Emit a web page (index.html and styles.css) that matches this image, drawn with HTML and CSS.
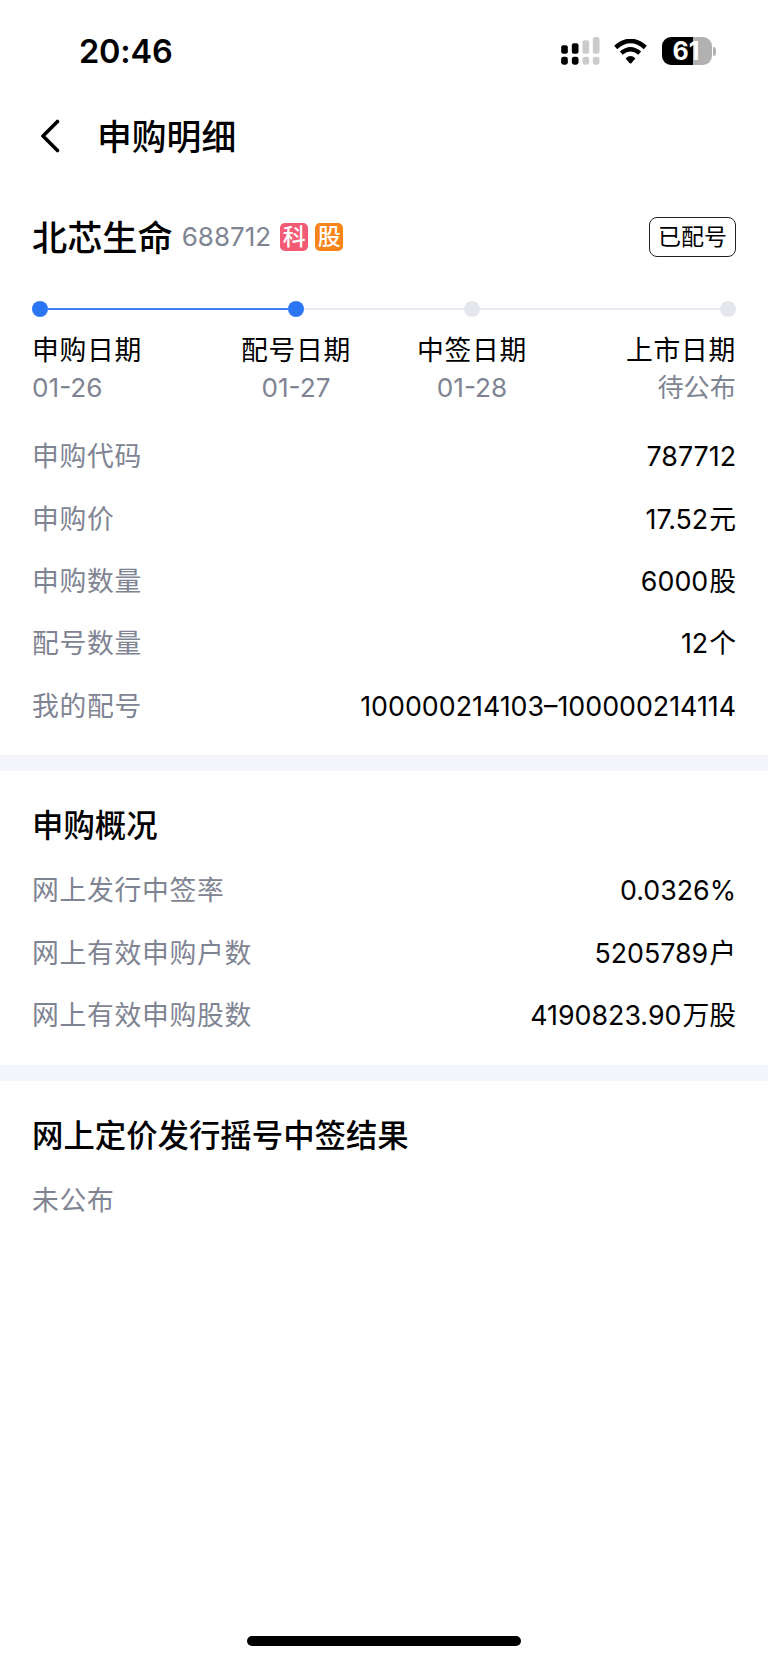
FILE: index.html
```
<!DOCTYPE html>
<html lang="zh-CN">
<head>
  <meta charset="UTF-8">
  <meta name="viewport" content="width=device-width, initial-scale=1.0">
  <title>申购明细</title>
  <link rel="stylesheet" href="styles.css">
</head>
<body>
  <div class="page">
    <div class="status-bar">
      <span class="time">20:46</span>
      <div class="status-icons">
        <svg class="signal" viewBox="0 0 116 84">
          <g fill="#000">
            <rect x="0" y="25" width="20" height="25" rx="6"/>
            <rect x="32" y="19" width="20" height="31" rx="6"/>
            <rect x="0" y="59" width="20" height="24" rx="7"/>
            <rect x="32" y="59" width="20" height="24" rx="7"/>
          </g>
          <g fill="#cbcbcb">
            <rect x="64" y="10" width="20" height="40" rx="6"/>
            <rect x="95" y="0" width="20" height="50" rx="6"/>
            <rect x="64" y="59" width="20" height="24" rx="7"/>
            <rect x="95" y="59" width="20" height="24" rx="7"/>
          </g>
        </svg>
        <svg class="wifi" viewBox="0 0 100 76">
          <path d="M5 26Q50 -14 95 26" fill="none" stroke="#000" stroke-width="14"/>
          <path d="M22 43Q50 19 78 43" fill="none" stroke="#000" stroke-width="13"/>
          <path d="M35 59Q50 45 65 59L52.500 73.500Q50 76 47.500 73.500Z"/>
        </svg>
        <div class="battery">
          <div class="battery-body">61</div>
          <div class="battery-cap"></div>
        </div>
      </div>
    </div>

    <header class="nav">
      <svg class="back" viewBox="0 0 20 34">
        <path d="M17.500 2.500L3 17L17.500 31.500" fill="none" stroke="#000" stroke-width="3.600" stroke-linecap="round" stroke-linejoin="round"/>
      </svg>
      <h1>申购明细</h1>
    </header>

    <section class="detail">
      <div class="stock">
        <span class="stock-name">北芯生命</span>
        <span class="stock-code">688712</span>
        <span class="tag tag-red">科</span>
        <span class="tag tag-orange">股</span>
        <span class="state">已配号</span>
      </div>

      <div class="steps">
        <div class="step first">
          <div class="track"><i class="dot on"></i><i class="line on"></i></div>
          <p class="step-name">申购日期</p>
          <p class="step-date">01-26</p>
        </div>
        <div class="step">
          <div class="track"><i class="line on"></i><i class="dot on"></i><i class="line"></i></div>
          <p class="step-name">配号日期</p>
          <p class="step-date">01-27</p>
        </div>
        <div class="step">
          <div class="track"><i class="line"></i><i class="dot"></i><i class="line"></i></div>
          <p class="step-name">中签日期</p>
          <p class="step-date">01-28</p>
        </div>
        <div class="step last">
          <div class="track"><i class="line"></i><i class="dot"></i></div>
          <p class="step-name">上市日期</p>
          <p class="step-date">待公布</p>
        </div>
      </div>

      <div class="rows">
        <div class="row"><span class="label">申购代码</span><span class="value">787712</span></div>
        <div class="row"><span class="label">申购价</span><span class="value">17.52<b>元</b></span></div>
        <div class="row"><span class="label">申购数量</span><span class="value">6000<b>股</b></span></div>
        <div class="row"><span class="label">配号数量</span><span class="value">12<b>个</b></span></div>
        <div class="row"><span class="label">我的配号</span><span class="value">100000214103–100000214114</span></div>
      </div>
    </section>

    <section class="block">
      <h2>申购概况</h2>
      <div class="row"><span class="label">网上发行中签率</span><span class="value">0.0326%</span></div>
      <div class="row"><span class="label">网上有效申购户数</span><span class="value">5205789<b>户</b></span></div>
      <div class="row"><span class="label">网上有效申购股数</span><span class="value">4190823.90<b>万股</b></span></div>
    </section>

    <section class="block">
      <h2>网上定价发行摇号中签结果</h2>
      <div class="row"><span class="label">未公布</span></div>
    </section>

    <div class="home-bar"></div>
  </div>
</body>
</html>
```
FILE: styles.css
```
* {
  margin: 0;
  padding: 0;
  box-sizing: border-box;
}

body {
  background-color: #fff;
  color: #000;
  font-family: Inter, "Noto Sans CJK SC", sans-serif;
}

.page {
  height: 1663px;
  display: flex;
  flex-direction: column;
  overflow: hidden;
}

/* status bar */
.status-bar {
  height: 102px;
  padding: 0 52px 0 79px;
  display: flex;
  justify-content: space-between;
  align-items: center;
}

.time {
  padding-top: 2px;
  font-size: 32.5px;
  font-weight: 600;
  line-height: 40px;
  letter-spacing: -0.2px;
}

.status-icons {
  display: flex;
  align-items: center;
}

.signal {
  width: 39px;
  height: 28px;
  margin-right: 14px;
}

.wifi {
  width: 33px;
  height: 25px;
  margin-right: 15px;
}

.battery {
  display: flex;
  align-items: center;
  gap: 1px;
}

.battery-body {
  width: 50px;
  height: 28px;
  padding-right: 2px;
  border-radius: 9px;
  background: linear-gradient(to right, #000 31px, #b1b1b1 31px);
  color: #fff;
  font-size: 25px;
  font-weight: 700;
  line-height: 28px;
  text-align: center;
}

.battery-cap {
  width: 3px;
  height: 9px;
  border-radius: 0 4px 4px 0;
  background-color: #b1b1b1;
}

/* title */
.nav {
  height: 68px;
  padding-left: 40px;
  display: flex;
  align-items: center;
}

.back {
  width: 20px;
  height: 34px;
  margin-right: 37px;
}

h1 {
  padding-top: 2px;
  font-size: 34.8px;
  font-weight: 500;
  line-height: 48px;
}

.detail {
  height: 585px;
  padding: 42px 32px 0;
}

.stock {
  height: 50px;
  display: flex;
  align-items: center;
}

.stock-name {
  padding-top: 1px;
  font-size: 35.2px;
  font-weight: 500;
  line-height: 50px;
}

.stock-code {
  margin: 0 9px;
  padding-bottom: 2px;
  font-size: 26px;
  color: #7f8493;
}

.tag {
  width: 28px;
  height: 28px;
  margin: 0 7px 1px 0;
  border-radius: 5px;
  color: #fff;
  font-size: 23px;
  font-weight: 500;
  line-height: 28px;
  text-align: center;
}

.tag-red {
  background-color: #f35b74;
}

.tag-orange {
  background-color: #f98419;
}

.state {
  width: 87px;
  height: 40px;
  margin: 0 0 1px auto;
  border: 1px solid #222;
  border-radius: 8px;
  font-size: 23px;
  line-height: 39px;
  text-align: center;
}

/* date steps */
.steps {
  margin-top: 39px;
  display: grid;
  grid-template-columns: repeat(4, 1fr);
}

.step {
  text-align: center;
}

.step.first {
  text-align: left;
}

.step.last {
  text-align: right;
}

.track {
  height: 16px;
  display: flex;
  align-items: center;
}

.dot {
  width: 16px;
  height: 16px;
  border-radius: 50%;
  background-color: #e5e6eb;
}

.line {
  flex: 1;
  height: 2px;
  background-color: #e7e8f0;
}

.dot.on {
  background-color: #2a76f4;
}

.line.on {
  background-color: #3b81f5;
}

.step-name {
  margin-top: 13px;
  font-size: 26.8px;
  line-height: 40px;
  letter-spacing: 0.7px;
}

.step-date {
  font-size: 26.2px;
  line-height: 36px;
  color: #7f8493;
}

.rows {
  margin-top: 19px;
}

.row {
  height: 62.4px;
  display: flex;
  justify-content: space-between;
  align-items: center;
  font-size: 26.8px;
  line-height: 40px;
}

.label {
  color: #7f8493;
  letter-spacing: 0.7px;
}

.value b {
  margin-left: 1px;
  font-weight: 400;
}

.block {
  height: 310px;
  border-top: 16px solid #f4f5fa;
  padding: 32px 32px 0;
}

h2 {
  height: 56px;
  font-size: 31.4px;
  font-weight: 500;
  line-height: 46px;
}

.home-bar {
  width: 274px;
  height: 10px;
  margin: auto auto 17px;
  border-radius: 5px;
  background-color: #000;
}
```
